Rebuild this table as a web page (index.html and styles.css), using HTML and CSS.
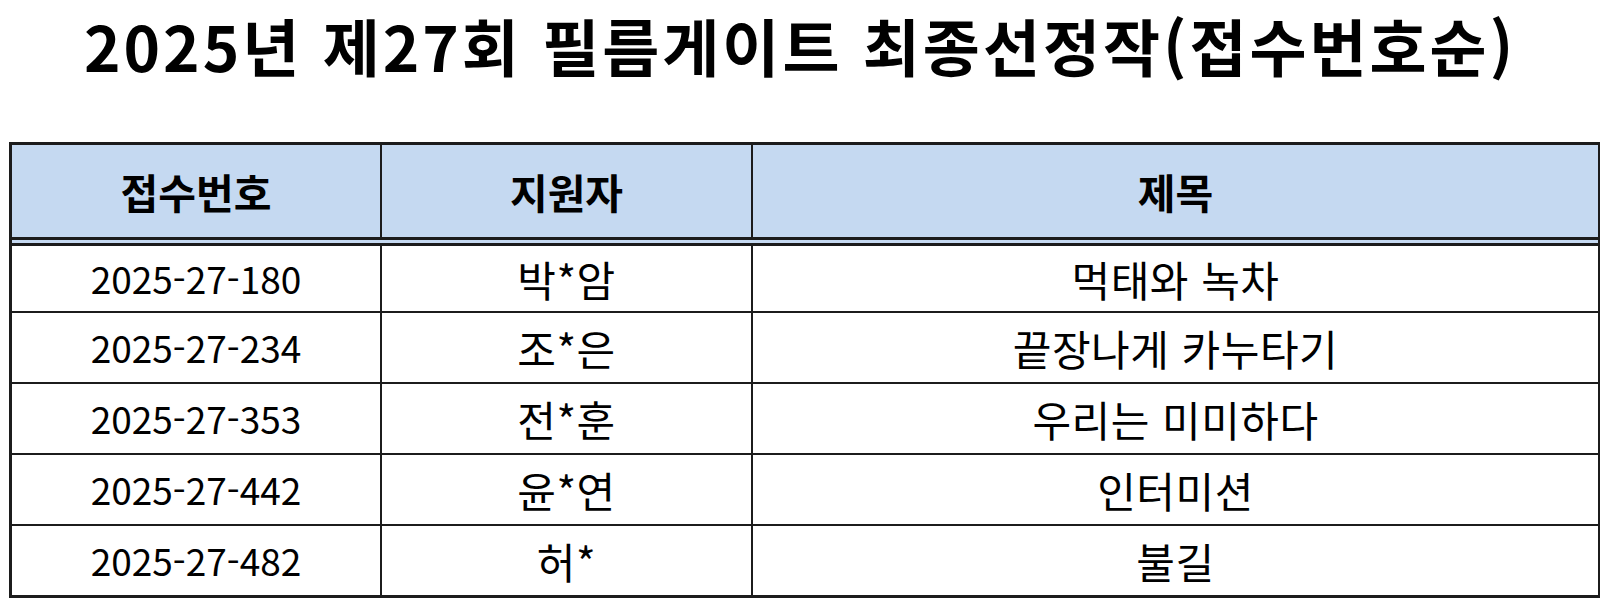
FILE: index.html
```html
<!DOCTYPE html>
<html lang="ko">
<head>
<meta charset="utf-8">
<title>2025년 제27회 필름게이트 최종선정작</title>
<link rel="stylesheet" href="styles.css">
</head>
<body>
<h1 class="title">2025년 제27회 필름게이트 최종선정작(접수번호순)</h1>
<table class="list">
  <colgroup>
    <col class="c1"><col class="c2"><col class="c3">
  </colgroup>
  <thead>
    <tr class="head">
      <th>접수번호</th>
      <th>지원자</th>
      <th class="last">제목</th>
    </tr>
    <tr class="gap"><td colspan="3" class="last"></td></tr>
  </thead>
  <tbody>
    <tr class="first"><td class="num">2025-27-180</td><td class="ko">박*암</td><td class="ko last">먹태와 녹차</td></tr>
    <tr><td class="num">2025-27-234</td><td class="ko">조*은</td><td class="ko last">끝장나게 카누타기</td></tr>
    <tr><td class="num">2025-27-353</td><td class="ko">전*훈</td><td class="ko last">우리는 미미하다</td></tr>
    <tr><td class="num">2025-27-442</td><td class="ko">윤*연</td><td class="ko last">인터미션</td></tr>
    <tr class="end"><td class="num">2025-27-482</td><td class="ko">허*</td><td class="ko last">불길</td></tr>
  </tbody>
</table>
</body>
</html>
```
FILE: styles.css
```css
html, body {
  margin: 0;
  padding: 0;
  background: #ffffff;
}
body {
  font-family: "Noto Sans CJK KR", "Noto Sans", sans-serif;
  color: #000;
}
.title {
  margin: 0;
  height: 142px;
  box-sizing: border-box;
  font-size: 62px;
  line-height: 90px;
  letter-spacing: 3px;
  font-weight: 700;
  text-align: center;
}
.list {
  margin-left: 9px;
  border-collapse: separate;
  border-spacing: 0;
  table-layout: fixed;
  width: 1589px;
  border-top: 3px solid #1c1c1c;
  border-left: 3px solid #1c1c1c;
}
.c1 { width: 370px; }
.c2 { width: 371px; }
.c3 { width: 848px; }
.list th,
.list td {
  padding: 0;
  text-align: center;
  vertical-align: middle;
  border-right: 2px solid #1c1c1c;
  border-bottom: 2px solid #1c1c1c;
  box-sizing: border-box;
}
.list .last { border-right-width: 3px; }
.head th {
  background: #c5d9f1;
  height: 95px;
  border-bottom-width: 3px;
  font-size: 41px;
  font-weight: 700;
  line-height: 1;
}
.gap td {
  background: #c5d9f1;
  height: 6px;
  border-bottom-width: 3px;
}
.list tbody td {
  height: 71px;
  font-weight: 400;
  line-height: 1;
}
.list tbody td.num { font-size: 37px; }
.list tbody td.ko {
  font-size: 42px;
  letter-spacing: 0.5px;
}
.list tbody tr.first td { height: 67px; }
.list tbody tr.end td {
  height: 72px;
  border-bottom-width: 3px;
}
```
